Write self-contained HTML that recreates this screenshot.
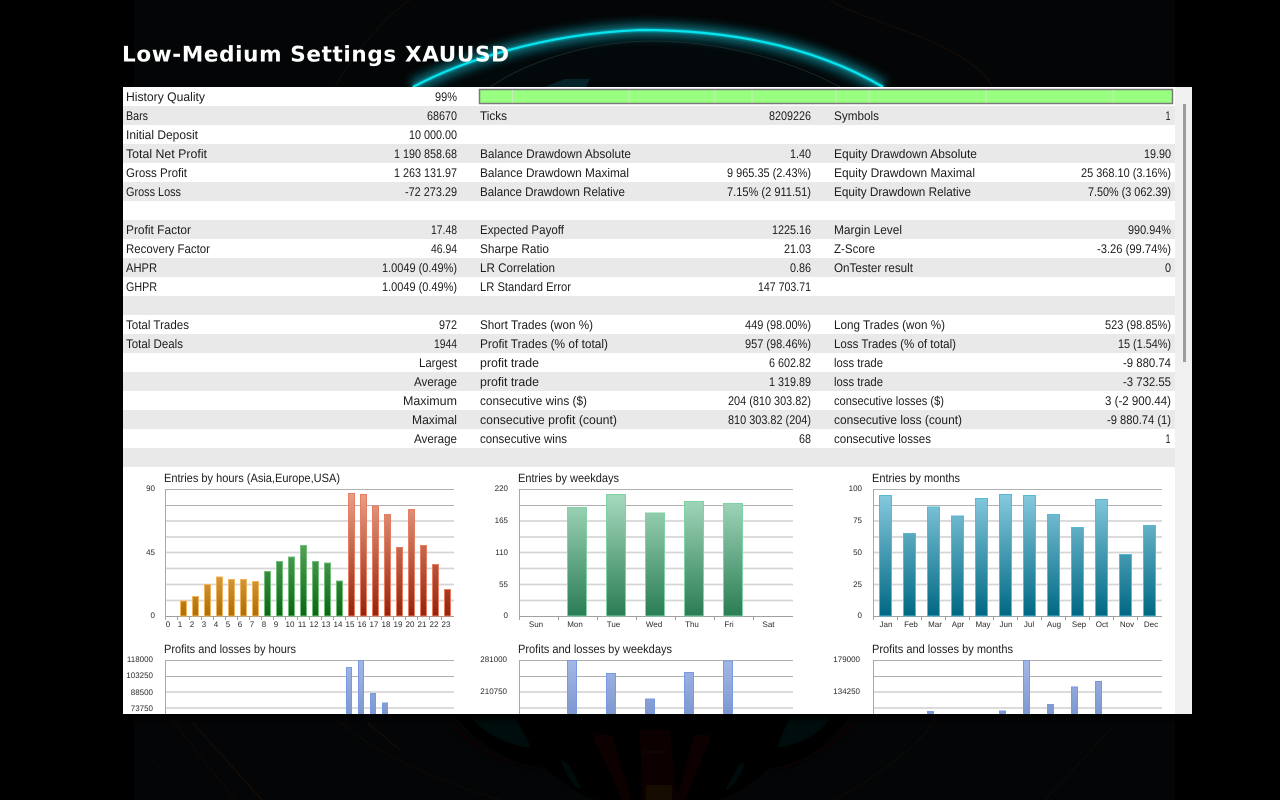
<!DOCTYPE html>
<html><head><meta charset="utf-8"><title>Low-Medium Settings XAUUSD</title>
<style>
html,body{margin:0;padding:0;background:#000;width:1280px;height:800px;overflow:hidden}
svg{display:block}
text{font-family:"Liberation Sans",sans-serif;text-rendering:geometricPrecision}
.t text{font-size:12.5px;fill:#1c1c1c}
.r{text-anchor:end}
.s text{font-size:8px;fill:#2a2a2a}
.h text{font-size:12px;fill:#1c1c1c}
</style></head><body>
<svg width="1280" height="800" viewBox="0 0 1280 800" xmlns="http://www.w3.org/2000/svg">
<defs>
<clipPath id="pc"><rect x="123" y="87" width="1069" height="627"/></clipPath>
<filter id="b1" x="-20%" y="-50%" width="140%" height="200%"><feGaussianBlur stdDeviation="4.5"/></filter>
<filter id="b0" x="-20%" y="-50%" width="140%" height="200%"><feGaussianBlur stdDeviation="1.2"/></filter>
<filter id="b3" x="-20%" y="-20%" width="140%" height="140%"><feGaussianBlur stdDeviation="2"/></filter>
<linearGradient id="sh" x1="0" y1="0" x2="0" y2="1"><stop offset="0" stop-color="#000"/><stop offset="1" stop-color="#000" stop-opacity="0"/></linearGradient>
<linearGradient id="go" gradientUnits="userSpaceOnUse" x1="0" y1="570" x2="0" y2="616"><stop offset="0" stop-color="#daa04a"/><stop offset="1" stop-color="#b06c00"/></linearGradient>
<linearGradient id="gg" gradientUnits="userSpaceOnUse" x1="0" y1="540" x2="0" y2="616"><stop offset="0" stop-color="#5aa660"/><stop offset="1" stop-color="#0a6612"/></linearGradient>
<linearGradient id="gr" gradientUnits="userSpaceOnUse" x1="0" y1="490" x2="0" y2="616"><stop offset="0" stop-color="#e8a48e"/><stop offset="1" stop-color="#92240a"/></linearGradient>
<linearGradient id="gt" gradientUnits="userSpaceOnUse" x1="0" y1="494" x2="0" y2="616"><stop offset="0" stop-color="#a6dabe"/><stop offset="1" stop-color="#2a7d55"/></linearGradient>
<linearGradient id="gb" gradientUnits="userSpaceOnUse" x1="0" y1="494" x2="0" y2="616"><stop offset="0" stop-color="#86cade"/><stop offset="1" stop-color="#006884"/></linearGradient>
<linearGradient id="gp" gradientUnits="userSpaceOnUse" x1="0" y1="660" x2="0" y2="740"><stop offset="0" stop-color="#a4b8e6"/><stop offset="1" stop-color="#6a88c6"/></linearGradient>
</defs>

<!-- background -->
<rect width="1280" height="800" fill="#000"/>
<rect x="134" y="0" width="1041" height="800" fill="#040506"/>
<path d="M413 87C460 62 540 34 640 30C740 30 820 50 883 87Z" fill="#03080a"/>
<path d="M413 87C460 62 540 34 640 30C740 30 820 50 883 87" fill="none" stroke="#07727e" stroke-width="15" opacity=".8" filter="url(#b1)"/>
<path d="M413 87C460 62 540 34 640 30C740 30 820 50 883 87" fill="none" stroke="#07c8d4" stroke-width="3.5" opacity=".7" filter="url(#b0)"/>
<path d="M413 87C460 62 540 34 640 30C740 30 820 50 883 87" fill="none" stroke="#08e4ee" stroke-width="2.2"/>
<path d="M490 87C530 60 590 42 650 41C720 41 790 60 840 87" fill="none" stroke="#26383a" stroke-width="1" opacity=".6"/>
<path d="M545 87L565 79H590L586 87Z" fill="#062a32" opacity=".8"/>
<path d="M830 0C870 25 965 40 993 87" fill="none" stroke="#170e07" stroke-width="1"/>
<path d="M410 0C380 20 350 60 335 87" fill="none" stroke="#120d08" stroke-width="1"/>

<!-- bottom artwork -->
<g>
<path d="M453 714C480 750 520 765 545 768C570 790 590 800 600 800H710C730 800 750 785 770 768C800 765 830 745 852 714Z" fill="#000"/>
<g filter="url(#b3)">
<path d="M470 716H515L532 748C505 745 485 735 470 716Z" fill="#03080a"/>
<path d="M832 716H790L776 748C800 745 820 735 832 716Z" fill="#03080a"/>
<path d="M560 755C575 770 578 785 585 795C572 785 562 770 560 755Z" fill="#040d10"/>
<path d="M746 755C735 770 728 785 722 795C735 785 746 770 746 755Z" fill="#040d10"/>
<path d="M450 722C470 745 505 765 540 768" fill="none" stroke="#0e0603" stroke-width="3"/>
<path d="M855 722C835 745 800 765 775 768" fill="none" stroke="#0e0603" stroke-width="3"/>
<path d="M640 730L642 800H676L670 730Z" fill="#080401"/>
<path d="M592 735L622 800H632L612 735Z" fill="#070301"/>
<path d="M712 735L685 800H676L694 735Z" fill="#070301"/>
<path d="M646 785H672V802H646Z" fill="#160802"/>
<path d="M550 735L590 750L600 775L565 762Z" fill="#060300"/>
<path d="M765 735L716 750L705 775L745 762Z" fill="#060300"/>
</g>
<path d="M642 752H666" stroke="#0e0602" stroke-width="2"/>
<path d="M192 722L262 800" fill="none" stroke="#170d06" stroke-width="1.2"/>
<path d="M172 720L235 800" fill="none" stroke="#120a05" stroke-width="1"/>
<path d="M145 750L185 800" fill="none" stroke="#0e0804" stroke-width="1"/>
<path d="M367 722L400 750" fill="none" stroke="#170d06" stroke-width="1.2"/>
<path d="M330 714C370 750 420 775 500 800" fill="none" stroke="#0f0b07" stroke-width="1"/>
<path d="M940 714C920 745 880 775 835 800" fill="none" stroke="#100c07" stroke-width="1"/>
<path d="M1110 730L1045 800" fill="none" stroke="#0f0b06" stroke-width="1"/>
</g>
<rect x="123" y="714" width="1069" height="10" fill="url(#sh)"/>

<!-- panel -->
<rect x="123" y="87" width="1069" height="627" fill="#fff"/>
<rect x="1175" y="87" width="17" height="627" fill="#f0f0f0"/>
<rect x="1183" y="104" width="3" height="258" fill="#9c9c9c"/>
<g fill="#e9e9e9">
<rect x="123" y="106" width="1052" height="19"/>
<rect x="123" y="144" width="1052" height="19"/>
<rect x="123" y="182" width="1052" height="19"/>
<rect x="123" y="220" width="1052" height="19"/>
<rect x="123" y="258" width="1052" height="19"/>
<rect x="123" y="296" width="1052" height="19"/>
<rect x="123" y="334" width="1052" height="19"/>
<rect x="123" y="372" width="1052" height="19"/>
<rect x="123" y="410" width="1052" height="19"/>
<rect x="123" y="448" width="1052" height="19"/>
</g>
<rect x="479.5" y="89.5" width="693" height="14" fill="#99ff80" stroke="#7a7a7a" stroke-width="1.5"/>
<path d="M512.5 90V103M629 90V103M715 90V103M752 90V103M836 90V103M869 90V103M986 90V103M1113 90V103" stroke="#c6e8ba" stroke-width="1"/>

<!-- title -->
<text x="122" y="61.5" style="font-family:'DejaVu Sans','Liberation Sans',sans-serif" font-size="21.5" font-weight="700" fill="#fff" textLength="387" lengthAdjust="spacing">Low-Medium Settings XAUUSD</text>

<g class="t">
<text lengthAdjust="spacingAndGlyphs" x="126" y="101" textLength="79">History Quality</text><text lengthAdjust="spacingAndGlyphs" class="r" x="457" y="101" textLength="22">99%</text>
<text lengthAdjust="spacingAndGlyphs" x="126" y="120" textLength="22">Bars</text><text lengthAdjust="spacingAndGlyphs" class="r" x="457" y="120" textLength="30">68670</text><text lengthAdjust="spacingAndGlyphs" x="480" y="120" textLength="27">Ticks</text><text lengthAdjust="spacingAndGlyphs" class="r" x="811" y="120" textLength="42">8209226</text><text lengthAdjust="spacingAndGlyphs" x="834" y="120" textLength="45">Symbols</text><text lengthAdjust="spacingAndGlyphs" class="r" x="1170.5" y="120" textLength="5">1</text>
<text lengthAdjust="spacingAndGlyphs" x="126" y="139" textLength="72">Initial Deposit</text><text lengthAdjust="spacingAndGlyphs" class="r" x="457" y="139" textLength="48">10 000.00</text>
<text lengthAdjust="spacingAndGlyphs" x="126" y="158" textLength="81">Total Net Profit</text><text lengthAdjust="spacingAndGlyphs" class="r" x="457" y="158" textLength="63">1 190 858.68</text><text lengthAdjust="spacingAndGlyphs" x="480" y="158" textLength="151">Balance Drawdown Absolute</text><text lengthAdjust="spacingAndGlyphs" class="r" x="811" y="158" textLength="21">1.40</text><text lengthAdjust="spacingAndGlyphs" x="834" y="158" textLength="143">Equity Drawdown Absolute</text><text lengthAdjust="spacingAndGlyphs" class="r" x="1171" y="158" textLength="27">19.90</text>
<text lengthAdjust="spacingAndGlyphs" x="126" y="177" textLength="61">Gross Profit</text><text lengthAdjust="spacingAndGlyphs" class="r" x="457" y="177" textLength="63">1 263 131.97</text><text lengthAdjust="spacingAndGlyphs" x="480" y="177" textLength="149">Balance Drawdown Maximal</text><text lengthAdjust="spacingAndGlyphs" class="r" x="811" y="177" textLength="84">9 965.35 (2.43%)</text><text lengthAdjust="spacingAndGlyphs" x="834" y="177" textLength="141">Equity Drawdown Maximal</text><text lengthAdjust="spacingAndGlyphs" class="r" x="1171" y="177" textLength="90">25 368.10 (3.16%)</text>
<text lengthAdjust="spacingAndGlyphs" x="126" y="196" textLength="55">Gross Loss</text><text lengthAdjust="spacingAndGlyphs" class="r" x="457" y="196" textLength="52">-72 273.29</text><text lengthAdjust="spacingAndGlyphs" x="480" y="196" textLength="145">Balance Drawdown Relative</text><text lengthAdjust="spacingAndGlyphs" class="r" x="811" y="196" textLength="84">7.15% (2 911.51)</text><text lengthAdjust="spacingAndGlyphs" x="834" y="196" textLength="137">Equity Drawdown Relative</text><text lengthAdjust="spacingAndGlyphs" class="r" x="1171" y="196" textLength="83">7.50% (3 062.39)</text>
<text lengthAdjust="spacingAndGlyphs" x="126" y="234" textLength="65">Profit Factor</text><text lengthAdjust="spacingAndGlyphs" class="r" x="457" y="234" textLength="26">17.48</text><text lengthAdjust="spacingAndGlyphs" x="480" y="234" textLength="84">Expected Payoff</text><text lengthAdjust="spacingAndGlyphs" class="r" x="811" y="234" textLength="39">1225.16</text><text lengthAdjust="spacingAndGlyphs" x="834" y="234" textLength="68">Margin Level</text><text lengthAdjust="spacingAndGlyphs" class="r" x="1171" y="234" textLength="43">990.94%</text>
<text lengthAdjust="spacingAndGlyphs" x="126" y="253" textLength="84">Recovery Factor</text><text lengthAdjust="spacingAndGlyphs" class="r" x="457" y="253" textLength="26">46.94</text><text lengthAdjust="spacingAndGlyphs" x="480" y="253" textLength="69">Sharpe Ratio</text><text lengthAdjust="spacingAndGlyphs" class="r" x="811" y="253" textLength="27">21.03</text><text lengthAdjust="spacingAndGlyphs" x="834" y="253" textLength="41">Z-Score</text><text lengthAdjust="spacingAndGlyphs" class="r" x="1171" y="253" textLength="74">-3.26 (99.74%)</text>
<text lengthAdjust="spacingAndGlyphs" x="126" y="272" textLength="31">AHPR</text><text lengthAdjust="spacingAndGlyphs" class="r" x="457" y="272" textLength="75">1.0049 (0.49%)</text><text lengthAdjust="spacingAndGlyphs" x="480" y="272" textLength="75">LR Correlation</text><text lengthAdjust="spacingAndGlyphs" class="r" x="811" y="272" textLength="21">0.86</text><text lengthAdjust="spacingAndGlyphs" x="834" y="272" textLength="79">OnTester result</text><text lengthAdjust="spacingAndGlyphs" class="r" x="1171" y="272" textLength="6">0</text>
<text lengthAdjust="spacingAndGlyphs" x="126" y="291" textLength="31">GHPR</text><text lengthAdjust="spacingAndGlyphs" class="r" x="457" y="291" textLength="75">1.0049 (0.49%)</text><text lengthAdjust="spacingAndGlyphs" x="480" y="291" textLength="91">LR Standard Error</text><text lengthAdjust="spacingAndGlyphs" class="r" x="811" y="291" textLength="53">147 703.71</text>
<text lengthAdjust="spacingAndGlyphs" x="126" y="329" textLength="63">Total Trades</text><text lengthAdjust="spacingAndGlyphs" class="r" x="457" y="329" textLength="18">972</text><text lengthAdjust="spacingAndGlyphs" x="480" y="329" textLength="113">Short Trades (won %)</text><text lengthAdjust="spacingAndGlyphs" class="r" x="811" y="329" textLength="66">449 (98.00%)</text><text lengthAdjust="spacingAndGlyphs" x="834" y="329" textLength="111">Long Trades (won %)</text><text lengthAdjust="spacingAndGlyphs" class="r" x="1171" y="329" textLength="66">523 (98.85%)</text>
<text lengthAdjust="spacingAndGlyphs" x="126" y="348" textLength="57">Total Deals</text><text lengthAdjust="spacingAndGlyphs" class="r" x="457" y="348" textLength="23">1944</text><text lengthAdjust="spacingAndGlyphs" x="480" y="348" textLength="128">Profit Trades (% of total)</text><text lengthAdjust="spacingAndGlyphs" class="r" x="811" y="348" textLength="66">957 (98.46%)</text><text lengthAdjust="spacingAndGlyphs" x="834" y="348" textLength="122">Loss Trades (% of total)</text><text lengthAdjust="spacingAndGlyphs" class="r" x="1171" y="348" textLength="53">15 (1.54%)</text>
<text lengthAdjust="spacingAndGlyphs" class="r" x="457" y="367" textLength="38">Largest</text><text lengthAdjust="spacingAndGlyphs" x="480" y="367" textLength="59">profit trade</text><text lengthAdjust="spacingAndGlyphs" class="r" x="811" y="367" textLength="42">6 602.82</text><text lengthAdjust="spacingAndGlyphs" x="834" y="367" textLength="49">loss trade</text><text lengthAdjust="spacingAndGlyphs" class="r" x="1171" y="367" textLength="48">-9 880.74</text>
<text lengthAdjust="spacingAndGlyphs" class="r" x="457" y="386" textLength="43">Average</text><text lengthAdjust="spacingAndGlyphs" x="480" y="386" textLength="59">profit trade</text><text lengthAdjust="spacingAndGlyphs" class="r" x="811" y="386" textLength="42">1 319.89</text><text lengthAdjust="spacingAndGlyphs" x="834" y="386" textLength="49">loss trade</text><text lengthAdjust="spacingAndGlyphs" class="r" x="1171" y="386" textLength="48">-3 732.55</text>
<text lengthAdjust="spacingAndGlyphs" class="r" x="457" y="405" textLength="54">Maximum</text><text lengthAdjust="spacingAndGlyphs" x="480" y="405" textLength="107">consecutive wins ($)</text><text lengthAdjust="spacingAndGlyphs" class="r" x="811" y="405" textLength="83">204 (810 303.82)</text><text lengthAdjust="spacingAndGlyphs" x="834" y="405" textLength="110">consecutive losses ($)</text><text lengthAdjust="spacingAndGlyphs" class="r" x="1171" y="405" textLength="66">3 (-2 900.44)</text>
<text lengthAdjust="spacingAndGlyphs" class="r" x="457" y="424" textLength="45">Maximal</text><text lengthAdjust="spacingAndGlyphs" x="480" y="424" textLength="137">consecutive profit (count)</text><text lengthAdjust="spacingAndGlyphs" class="r" x="811" y="424" textLength="83">810 303.82 (204)</text><text lengthAdjust="spacingAndGlyphs" x="834" y="424" textLength="128">consecutive loss (count)</text><text lengthAdjust="spacingAndGlyphs" class="r" x="1171" y="424" textLength="64">-9 880.74 (1)</text>
<text lengthAdjust="spacingAndGlyphs" class="r" x="457" y="443" textLength="43">Average</text><text lengthAdjust="spacingAndGlyphs" x="480" y="443" textLength="87">consecutive wins</text><text lengthAdjust="spacingAndGlyphs" class="r" x="811" y="443" textLength="12">68</text><text lengthAdjust="spacingAndGlyphs" x="834" y="443" textLength="97">consecutive losses</text><text lengthAdjust="spacingAndGlyphs" class="r" x="1170.5" y="443" textLength="5">1</text>
</g>

<g clip-path="url(#pc)">
<!-- chart gridlines -->
<g fill="none">
<path d="M165 489.5H454M165 505.5H454M519 489.5H793M519 505.5H793M873 489.5H1162M873 505.5H1162M165 660.5H454M165 676.5H454M519 660.5H793M519 676.5H793M873 660.5H1162M873 676.5H1162" stroke="#b0b0b0"/>
<path d="M165 521H454M165 537H454M165 552.5H454M165 568.5H454M165 584.5H454M165 600.5H454M519 521H793M519 537H793M519 552.5H793M519 568.5H793M519 584.5H793M519 600.5H793M873 521H1162M873 537H1162M873 552.5H1162M873 568.5H1162M873 584.5H1162M873 600.5H1162M165 692H454M165 708H454M519 692H793M519 708H793M873 692H1162M873 708H1162" stroke="#d6d6d6" stroke-width="1.8"/>
<path d="M165.5 489V620M519.5 489V620M873.5 489V620M165.5 660V714M519.5 660V714M873.5 660V714" stroke="#a8a8a8"/>
<path d="M165 616.5H454M519 616.5H793M873 616.5H1162" stroke="#a0a0a0"/>
<path d="M177.5 616V620M189.5 616V620M201.5 616V620M213.5 616V620M225.5 616V620M237.5 616V620M249.5 616V620M261.5 616V620M273.5 616V620M285.5 616V620M297.5 616V620M309.5 616V620M321.5 616V620M333.5 616V620M345.5 616V620M357.5 616V620M369.5 616V620M381.5 616V620M393.5 616V620M405.5 616V620M417.5 616V620M429.5 616V620M441.5 616V620M558.5 616V620M597.5 616V620M636.5 616V620M675.5 616V620M714.5 616V620M753.5 616V620M897.5 616V620M921.5 616V620M945.5 616V620M969.5 616V620M993.5 616V620M1017.5 616V620M1041.5 616V620M1065.5 616V620M1089.5 616V620M1113.5 616V620M1137.5 616V620" stroke="#a0a0a0"/>
</g>

<!-- hours entries -->
<g fill="url(#go)" stroke="#f0b45c">
<rect x="180.5" y="601" width="6" height="15"/><rect x="192.5" y="596.5" width="6" height="19.5"/><rect x="204.5" y="584.5" width="6" height="31.5"/><rect x="216.5" y="577" width="6" height="39"/><rect x="228.5" y="579.5" width="6" height="36.5"/><rect x="240.5" y="579.5" width="6" height="36.5"/><rect x="252.5" y="581.5" width="6" height="34.5"/>
</g>
<g fill="url(#gg)" stroke="#72be78">
<rect x="264.5" y="571.5" width="6" height="44.5"/><rect x="276.5" y="561.5" width="6" height="54.5"/><rect x="288.5" y="557" width="6" height="59"/><rect x="300.5" y="545.5" width="6" height="70.5"/><rect x="312.5" y="561.5" width="6" height="54.5"/><rect x="324.5" y="563" width="6" height="53"/><rect x="336.5" y="581" width="6" height="35"/>
</g>
<g fill="url(#gr)" stroke="#ea7c60">
<rect x="348.5" y="493.5" width="6" height="122.5"/><rect x="360.5" y="494.5" width="6" height="121.5"/><rect x="372.5" y="506" width="6" height="110"/><rect x="384.5" y="514.5" width="6" height="101.5"/><rect x="396.5" y="547.5" width="6" height="68.5"/><rect x="408.5" y="509.5" width="6" height="106.5"/><rect x="420.5" y="545.5" width="6" height="70.5"/><rect x="432.5" y="564.5" width="6" height="51.5"/><rect x="444.5" y="589.5" width="6" height="26.5"/>
</g>
<!-- weekdays entries -->
<g fill="url(#gt)" stroke="#80d2a4">
<rect x="567.5" y="507.5" width="19" height="108.5"/><rect x="606.5" y="494.5" width="19" height="121.5"/><rect x="645.5" y="513" width="19" height="103"/><rect x="684.5" y="501.5" width="19" height="114.5"/><rect x="723.5" y="503.5" width="19" height="112.5"/>
</g>
<!-- months entries -->
<g fill="url(#gb)" stroke="#58b8d6">
<rect x="879.5" y="495.5" width="12" height="120.5"/><rect x="903.5" y="533.5" width="12" height="82.5"/><rect x="927.5" y="507" width="12" height="109"/><rect x="951.5" y="516" width="12" height="100"/><rect x="975.5" y="498.5" width="12" height="117.5"/><rect x="999.5" y="494.5" width="12" height="121.5"/><rect x="1023.5" y="495.5" width="12" height="120.5"/><rect x="1047.5" y="514.5" width="12" height="101.5"/><rect x="1071.5" y="527.5" width="12" height="88.5"/><rect x="1095.5" y="499.5" width="12" height="116.5"/><rect x="1119.5" y="554.5" width="12" height="61.5"/><rect x="1143.5" y="525.5" width="12" height="90.5"/>
</g>
<!-- profits bars -->
<g fill="url(#gp)" stroke="#7a9ae0">
<rect x="346.5" y="667.5" width="5" height="50"/><rect x="358.5" y="660.5" width="5" height="57"/><rect x="370.5" y="693.5" width="5" height="24"/><rect x="382.5" y="703" width="5" height="14"/>
<rect x="567.5" y="660.5" width="9" height="57"/><rect x="606.5" y="673.5" width="9" height="44"/><rect x="645.5" y="699" width="9" height="18"/><rect x="684.5" y="672.5" width="9" height="45"/><rect x="723.5" y="661" width="9" height="56"/>
<rect x="927.5" y="711.5" width="6" height="6"/><rect x="999.5" y="711" width="6" height="6"/><rect x="1023.5" y="660.5" width="6" height="57"/><rect x="1047.5" y="704.5" width="6" height="13"/><rect x="1071.5" y="687" width="6" height="30"/><rect x="1095.5" y="681.5" width="6" height="36"/>
</g>
</g>

<!-- chart titles -->
<g class="h">
<text x="164" y="482" textLength="176" lengthAdjust="spacingAndGlyphs">Entries by hours (Asia,Europe,USA)</text>
<text x="518" y="482" textLength="101" lengthAdjust="spacingAndGlyphs">Entries by weekdays</text>
<text x="872" y="482" textLength="88" lengthAdjust="spacingAndGlyphs">Entries by months</text>
<text x="164" y="653" textLength="132" lengthAdjust="spacingAndGlyphs">Profits and losses by hours</text>
<text x="518" y="653" textLength="154" lengthAdjust="spacingAndGlyphs">Profits and losses by weekdays</text>
<text x="872" y="653" textLength="141" lengthAdjust="spacingAndGlyphs">Profits and losses by months</text>
</g>

<!-- axis labels -->
<g class="s">
<text class="r" x="155" y="491">90</text><text class="r" x="155" y="555">45</text><text class="r" x="155" y="618">0</text>
<text class="r" x="508" y="491">220</text><text class="r" x="508" y="523">165</text><text class="r" x="508" y="555">110</text><text class="r" x="508" y="587">55</text><text class="r" x="508" y="618">0</text>
<text class="r" x="862" y="491">100</text><text class="r" x="862" y="523">75</text><text class="r" x="862" y="555">50</text><text class="r" x="862" y="587">25</text><text class="r" x="862" y="618">0</text>
<text class="r" x="153" y="662">118000</text><text class="r" x="153" y="678">103250</text><text class="r" x="153" y="695">88500</text><text class="r" x="153" y="711">73750</text>
<text class="r" x="507" y="662">281000</text><text class="r" x="507" y="694">210750</text>
<text class="r" x="860" y="662">179000</text><text class="r" x="860" y="694">134250</text>
<text text-anchor="middle" x="168" y="627">0</text><text text-anchor="middle" x="180" y="627">1</text><text text-anchor="middle" x="192" y="627">2</text><text text-anchor="middle" x="204" y="627">3</text><text text-anchor="middle" x="216" y="627">4</text><text text-anchor="middle" x="228" y="627">5</text><text text-anchor="middle" x="240" y="627">6</text><text text-anchor="middle" x="252" y="627">7</text><text text-anchor="middle" x="264" y="627">8</text><text text-anchor="middle" x="276" y="627">9</text><text text-anchor="middle" x="290" y="627">10</text><text text-anchor="middle" x="302" y="627">11</text><text text-anchor="middle" x="314" y="627">12</text><text text-anchor="middle" x="326" y="627">13</text><text text-anchor="middle" x="338" y="627">14</text><text text-anchor="middle" x="350" y="627">15</text><text text-anchor="middle" x="362" y="627">16</text><text text-anchor="middle" x="374" y="627">17</text><text text-anchor="middle" x="386" y="627">18</text><text text-anchor="middle" x="398" y="627">19</text><text text-anchor="middle" x="410" y="627">20</text><text text-anchor="middle" x="422" y="627">21</text><text text-anchor="middle" x="434" y="627">22</text><text text-anchor="middle" x="446" y="627">23</text>
<text text-anchor="middle" x="536" y="627">Sun</text><text text-anchor="middle" x="575" y="627">Mon</text><text text-anchor="middle" x="613.5" y="627">Tue</text><text text-anchor="middle" x="654" y="627">Wed</text><text text-anchor="middle" x="692" y="627">Thu</text><text text-anchor="middle" x="729" y="627">Fri</text><text text-anchor="middle" x="768.5" y="627">Sat</text>
<text text-anchor="middle" x="886" y="627">Jan</text><text text-anchor="middle" x="911" y="627">Feb</text><text text-anchor="middle" x="935" y="627">Mar</text><text text-anchor="middle" x="958" y="627">Apr</text><text text-anchor="middle" x="983" y="627">May</text><text text-anchor="middle" x="1006" y="627">Jun</text><text text-anchor="middle" x="1029" y="627">Jul</text><text text-anchor="middle" x="1054" y="627">Aug</text><text text-anchor="middle" x="1079" y="627">Sep</text><text text-anchor="middle" x="1102" y="627">Oct</text><text text-anchor="middle" x="1127" y="627">Nov</text><text text-anchor="middle" x="1151" y="627">Dec</text>
</g>
</svg>
</body></html>
